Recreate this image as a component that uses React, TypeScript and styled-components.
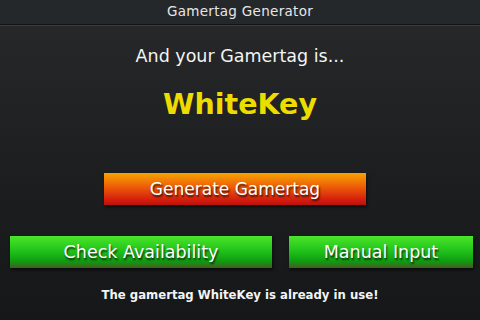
import React from 'react'
import styled, { createGlobalStyle } from 'styled-components'

const GlobalStyle = createGlobalStyle`
  html, body {
    margin: 0;
    padding: 0;
    background: #1b1d1f;
  }
  * {
    box-sizing: border-box;
  }
`

const Screen = styled.div`
  width: 480px;
  height: 320px;
  display: flex;
  flex-direction: column;
  overflow: hidden;
  font-family: 'DejaVu Sans', 'Liberation Sans', sans-serif;
  color: #f2f2f2;
  background: linear-gradient(180deg, #27292b 0%, #1c1e20 55%, #151719 100%);
`

const TitleBar = styled.div`
  height: 25px;
  display: flex;
  align-items: center;
  justify-content: center;
  padding-bottom: 3px;
  background: #25282a;
  border-bottom: 1px solid #111314;
  box-shadow: 0 1px 0 #3a3d3f;
  font-size: 13.5px;
  letter-spacing: 0.3px;
  color: #e6e6e6;
`

const Content = styled.div`
  flex: 1;
  display: flex;
  flex-direction: column;
  align-items: center;
  padding: 0 7px;
`

const Prompt = styled.div`
  margin-top: 19px;
  font-size: 17.5px;
  line-height: 24px;
  color: #f4f4f4;
`

const Gamertag = styled.div`
  margin-top: 19px;
  font-size: 28.5px;
  font-weight: bold;
  line-height: 36px;
  color: #ecdc00;
`

const Button = styled.button<{ $tone: 'orange' | 'green' }>`
  height: 32px;
  border: none;
  padding: 0;
  display: flex;
  align-items: center;
  justify-content: center;
  font-family: inherit;
  font-size: 17.5px;
  color: #ffffff;
  text-shadow: 1px 2px 2px rgba(0, 0, 0, 0.75);
  box-shadow: 1px 2px 3px rgba(0, 0, 0, 0.6);
  background: ${({ $tone }) =>
    $tone === 'orange'
      ? 'linear-gradient(180deg, #f7a400 0%, #ec5a08 45%, #d41b0e 85%, #b8120c 100%)'
      : 'linear-gradient(180deg, #4ae62a 0%, #22c41a 45%, #0f9a12 80%, #4a5a20 100%)'};
`

const GenerateButton = styled(Button)`
  width: 262px;
  margin-top: 50px;
  margin-right: 10px;
  font-size: 17px;
`

const ButtonRow = styled.div`
  width: 100%;
  margin-top: 31px;
  display: grid;
  grid-template-columns: 262px 184px;
  justify-content: space-between;
  padding: 0 0 0 3px;
`

const Status = styled.div`
  margin-top: 20px;
  font-size: 11.7px;
  font-weight: bold;
  line-height: 15px;
  color: #f4f4f4;
`

const App = () => (
  <>
    <GlobalStyle />
    <Screen>
      <TitleBar>Gamertag Generator</TitleBar>
      <Content>
        <Prompt>And your Gamertag is...</Prompt>
        <Gamertag>WhiteKey</Gamertag>
        <GenerateButton $tone="orange">Generate Gamertag</GenerateButton>
        <ButtonRow>
          <Button $tone="green">Check Availability</Button>
          <Button $tone="green">Manual Input</Button>
        </ButtonRow>
        <Status>The gamertag WhiteKey is already in use!</Status>
      </Content>
    </Screen>
  </>
)

export default App
